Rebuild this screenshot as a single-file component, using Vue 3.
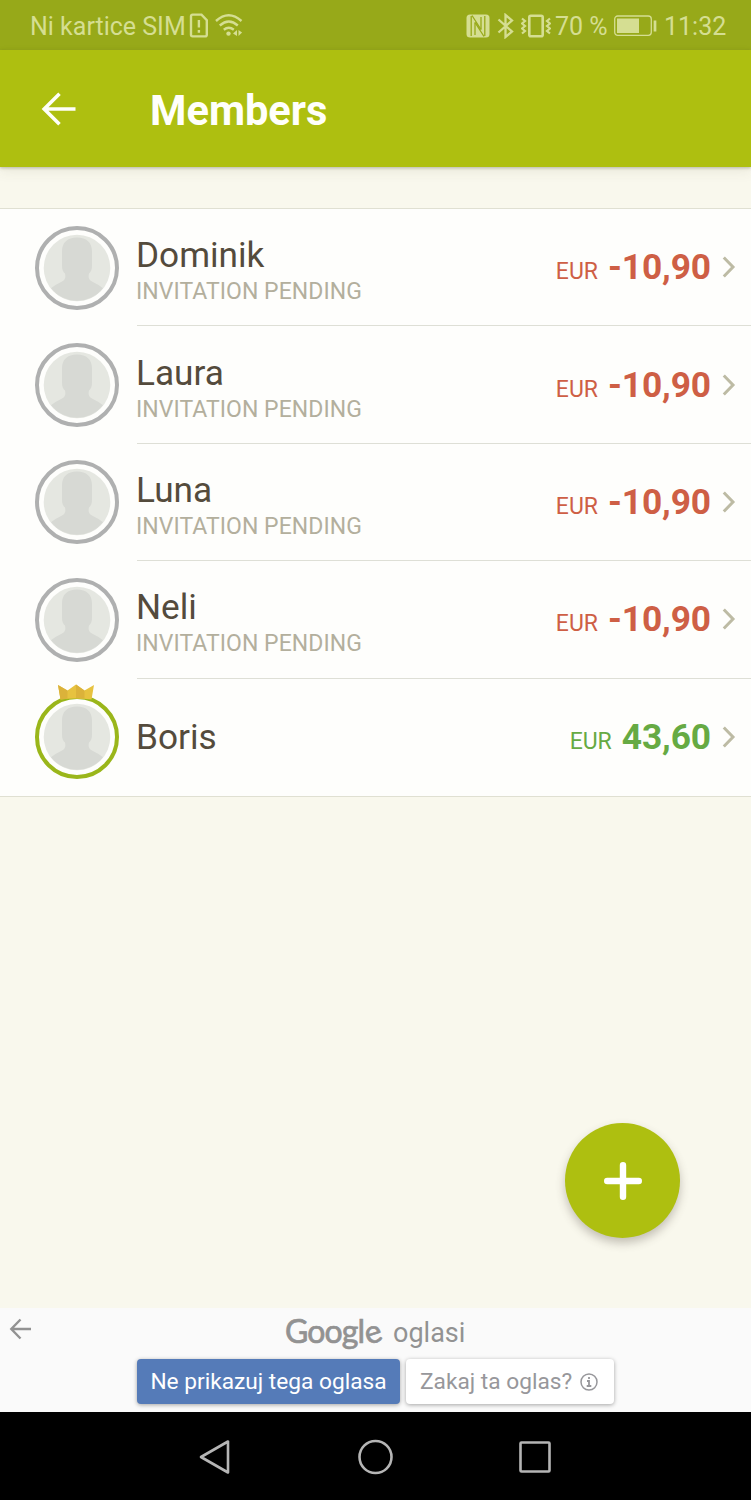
<script setup>
const members = [
  { name: 'Dominik', pending: true, amount: '-10,90' },
  { name: 'Laura', pending: true, amount: '-10,90' },
  { name: 'Luna', pending: true, amount: '-10,90' },
  { name: 'Neli', pending: true, amount: '-10,90' },
  { name: 'Boris', pending: false, amount: '43,60' },
]
</script>

<template>
  <div class="screen">
    <div class="status">
      <span class="carrier">Ni kartice SIM</span>
      <svg class="sim" width="20" height="26" viewBox="0 0 20 26" fill="none" stroke="currentColor" stroke-width="2.4">
        <path d="M2 3.2q0-1.600 1.600-1.600h8.900l5.300 5.600v14.600q0 1.600-1.600 1.600H3.600q-1.600 0-1.600-1.600z" />
        <path d="M9.900 7v7.600M9.900 17v2.800" />
      </svg>
      <svg class="wifi" width="28" height="26" viewBox="0 0 28 26" fill="none" stroke="currentColor" stroke-width="2.400">
        <path d="M1 8Q13.600-3.500 26.500 8M4.800 12.500q9-8 18 0M8.800 16.700q5-4 10 0" />
        <circle cx="13.500" cy="20.600" r="2.200" fill="currentColor" stroke="none" />
        <path d="M22 17v6l-4-2.500zM23.500 17v6l3.600-3.500z" fill="currentColor" stroke="none" />
      </svg>
      <span class="spacer"></span>
      <svg class="nfc" width="24" height="24" viewBox="0 0 24 24">
        <rect x="0.500" y="0.500" width="23" height="23" rx="3.500" fill="currentColor" />
        <path d="M5.200 2v20M18.800 2v20M9 21V8.500M15 3v12.500" fill="none" stroke="#97a919" stroke-width="1.300" />
        <path d="M6 1.500l9 14M9 8.500l9 14" fill="none" stroke="#97a919" stroke-width="1.300" />
      </svg>
      <svg class="bt" width="18" height="26" viewBox="0 0 18 26" fill="none" stroke="currentColor" stroke-width="2.300">
        <path d="M1.500 6.500L15 18.500 8.500 24V2L15 7.500 1.500 19.500" />
      </svg>
      <svg class="vibrate" width="30" height="24" viewBox="0 0 30 24" fill="none" stroke="currentColor">
        <rect x="8.300" y="1.800" width="13.400" height="20.400" rx="1.500" stroke-width="2.600" />
        <path d="M1 4.500l3 2.500-3 2.500 3 2.500-3 2.500 3 2.500-3 2.500M29 4.500l-3 2.500 3 2.500-3 2.500 3 2.500-3 2.500 3 2.500" stroke-width="2.200" />
      </svg>
      <span class="percent">70 %</span>
      <svg class="battery" width="43" height="22" viewBox="0 0 43 22" fill="none" stroke="currentColor">
        <rect x="0.700" y="1" width="36.600" height="19.300" rx="3" stroke-width="1.300" />
        <rect x="3" y="3.500" width="22" height="14.500" fill="currentColor" stroke="none" />
        <path d="M41 5.500v11" stroke-width="2.700" />
      </svg>
      <span class="clock">11:32</span>
    </div>

    <header class="bar">
      <svg width="36" height="34" viewBox="0 0 36 34" fill="none" stroke="#fffffa" stroke-width="3.600">
        <path d="M19.500 1.800L4.200 17l15.300 15.200M4 17h31.500" />
      </svg>
      <h1>Members</h1>
    </header>

    <ul class="list">
      <li v-for="m in members" :key="m.name">
        <div class="avatar" :class="{ owner: !m.pending }">
          <svg class="face" width="68" height="68" viewBox="0 0 68 68">
            <circle cx="34" cy="34" r="33.300" fill="#e5e7e1" />
            <path d="M34 3.500c-9.500 0-15 5-15 14v14c0 4 .8 6 3 8 .8 4 .5 6-3 8-4.500 2.300-8 4-11 6.800a33.300 33.300 0 0 0 52 0c-3-2.800-6.500-4.500-11-6.800-3.500-2-3.800-4-3-8 2.200-2 3-4 3-8v-14c0-9-5.500-14-15-14z" fill="#d7d9d4" />
          </svg>
          <svg v-if="!m.pending" class="crown" width="38" height="16" viewBox="0 0 38 16">
            <path d="M1 1l9.500 5.500L19 .5l8.500 6L37 1l-2.500 14.500Q19 13.500 3.500 15.500z" fill="#e7c23f" />
            <path d="M1 1l9.500 5.500v8.200l-7 .8zM19 .5l8.500 6v8L19 14z" fill="#dbb23a" />
          </svg>
        </div>
        <div class="entry">
          <div class="who" :class="{ pending: m.pending }">
            <span class="name">{{ m.name }}</span>
            <span v-if="m.pending" class="note">INVITATION PENDING</span>
          </div>
          <div class="sum" :class="{ plus: !m.pending }">
            <span class="cur">EUR</span><span class="amount">{{ m.amount }}</span>
          </div>
          <svg class="chevron" width="14" height="22" viewBox="0 0 14 22" fill="none" stroke="#bdbba4" stroke-width="3">
            <path d="M1.800 1.500l9.200 9.500-9.200 9.500" />
          </svg>
        </div>
      </li>
    </ul>

    <main class="space">
      <button class="fab" aria-label="Add">
        <svg width="38" height="38" viewBox="0 0 38 38" stroke="#fff" stroke-width="6.400" stroke-linecap="round">
          <path d="M19 3.200v31.600M3.200 19h31.600" />
        </svg>
      </button>
    </main>

    <section class="ad">
      <div class="ad-head">
        <svg class="ad-back" width="22" height="22" viewBox="0 0 22 22" fill="none" stroke="#929292" stroke-width="2.400">
          <path d="M11.500 1.500L2.300 11l9.200 9.500M2 11h20" />
        </svg>
        <span class="google">Googl<span class="tilt">e</span></span>
        <span class="oglasi">oglasi</span>
      </div>
      <div class="ad-actions">
        <button class="hide">Ne prikazuj tega oglasa</button>
        <button class="why">
          <span>Zakaj ta oglas?</span>
          <svg width="18" height="18" viewBox="0 0 18 18" fill="none" stroke="#97979b">
            <circle cx="9" cy="9" r="8" stroke-width="1.500" />
            <path d="M9 4v2M7 8h2v5M6.700 13h4.600" stroke-width="1.800" />
          </svg>
        </button>
      </div>
    </section>

    <nav class="nav">
      <svg width="32" height="36" viewBox="0 0 32 36"><path d="M29 2.500v31L2 18z" /></svg>
      <svg width="36" height="36" viewBox="0 0 36 36"><circle cx="18.500" cy="18" r="16" /></svg>
      <svg width="32" height="32" viewBox="0 0 32 32"><rect x="1.500" y="1.500" width="29" height="29" rx="1" /></svg>
    </nav>
  </div>
</template>

<style>
body { margin: 0; }
</style>

<style scoped>
.screen {
  width: 751px;
  height: 1500px;
  display: flex;
  flex-direction: column;
  background: #f9f8ed;
  font-family: Roboto, "Liberation Sans", sans-serif;
  overflow: hidden;
}
svg { display: block; flex: none; }
span { white-space: nowrap; }
button { font-family: inherit; border: 0; padding: 0; margin: 0; }

.status {
  height: 50px;
  flex: none;
  box-sizing: border-box;
  display: flex;
  align-items: center;
  padding: 2px 25px 0 30px;
  background: #97a919;
  color: #d5de92;
  font-size: 25px;
  line-height: 50px;
}
.carrier, .percent, .clock { padding-top: 2px; }
.carrier { width: 159px; }
.wifi { margin-left: 6px; }
.spacer { flex: 1; }
.bt { margin-left: 7px; }
.vibrate { margin-left: 6px; }
.percent { margin-left: 4px; width: 52px; }
.battery { margin-left: 7px; }
.clock { margin-left: 7px; width: 62px; }

.bar {
  height: 117px;
  flex: none;
  box-sizing: border-box;
  display: flex;
  align-items: center;
  padding-left: 40px;
  background: #aebf10;
  box-shadow: 0 1px 3px rgba(80, 80, 50, 0.35), 0 5px 12px rgba(80, 80, 50, 0.08);
}
h1 {
  margin: 5px 0 0 74px;
  font-size: 41.600px;
  line-height: 48px;
  font-weight: 700;
  color: #fffffa;
}

.list {
  list-style: none;
  margin: 41px 0 0;
  padding: 0;
  flex: none;
  border-top: 1px solid #e0e0d2;
  border-bottom: 1px solid #e0e0d2;
  background: #fefefc;
}
li {
  height: 117.400px;
  display: flex;
  align-items: center;
  padding-left: 35px;
}
.avatar {
  position: relative;
  width: 84px;
  height: 84px;
  box-sizing: border-box;
  border: 4px solid #afb0b0;
  border-radius: 50%;
  padding: 4px;
  flex: none;
}
.avatar.owner { border-color: #9ab61a; }
.crown { position: absolute; left: 18px; top: -15px; }
.entry {
  flex: 1;
  height: 100%;
  box-sizing: border-box;
  display: flex;
  align-items: center;
  margin-left: 18px;
  padding-right: 15px;
  border-bottom: 1px solid #dedfd6;
}
li:last-child .entry { border-bottom: 0; }
.who { flex: 1; display: flex; flex-direction: column; margin-left: -1px; }
.who.pending { padding-top: 9px; }
.name { font-size: 35.200px; line-height: 40px; color: #544b3c; }
.note { font-size: 23px; line-height: 33px; color: #b3af9d; letter-spacing: 0.050px; }
.sum { display: flex; align-items: baseline; color: #ce5f45; }
.sum.plus { color: #66aa43; }
.cur { font-size: 23px; margin-right: 10px; }
.amount { font-size: 35.300px; font-weight: 700; letter-spacing: -0.100px; }
.chevron { margin-left: 11px; }

.space {
  flex: 1;
  display: flex;
  justify-content: flex-end;
  align-items: flex-end;
  padding: 0 71px 70px 0;
}
.fab {
  width: 115px;
  height: 115px;
  border-radius: 50%;
  background: #aebf10;
  display: flex;
  align-items: center;
  justify-content: center;
  box-shadow: 0 5px 10px rgba(70, 60, 50, 0.3);
}

.ad { height: 104px; flex: none; background: #fafafa; }
.ad-head { height: 51px; display: flex; align-items: flex-start; color: #929292; }
.ad-back { margin: 10px 0 0 9px; }
.google {
  width: 108px;
  margin-left: 254px;
  font-family: Lato, "Open Sans", sans-serif;
  font-weight: 400;
  font-size: 32px;
  line-height: 46px;
  letter-spacing: -0.900px;
  -webkit-text-stroke: 0.7px #929292;
}
.tilt { display: inline-block; transform: rotate(-18deg); }
.oglasi { font-size: 27px; line-height: 50px; }
.ad-actions { display: flex; gap: 6px; padding-left: 137px; }
.hide, .why {
  height: 45px;
  border-radius: 4px;
  font-size: 22.700px;
  line-height: 46px;
  box-shadow: 0 1px 4px rgba(0, 0, 0, 0.35);
}
.hide { width: 263px; background: #557bb8; color: #fff; white-space: nowrap; }
.why {
  width: 208px;
  display: flex;
  align-items: center;
  justify-content: space-between;
  padding: 0 16px 0 14px;
  box-sizing: border-box;
  background: #fff;
  color: #97979b;
}

.nav {
  height: 88px;
  flex: none;
  box-sizing: border-box;
  display: flex;
  align-items: center;
  padding: 2px 0 0 199px;
  background: #000;
}
.nav svg { fill: none; stroke: #b5b5b5; stroke-width: 2.6; stroke-linejoin: round; }
.nav svg + svg { margin-left: 126px; }
</style>
